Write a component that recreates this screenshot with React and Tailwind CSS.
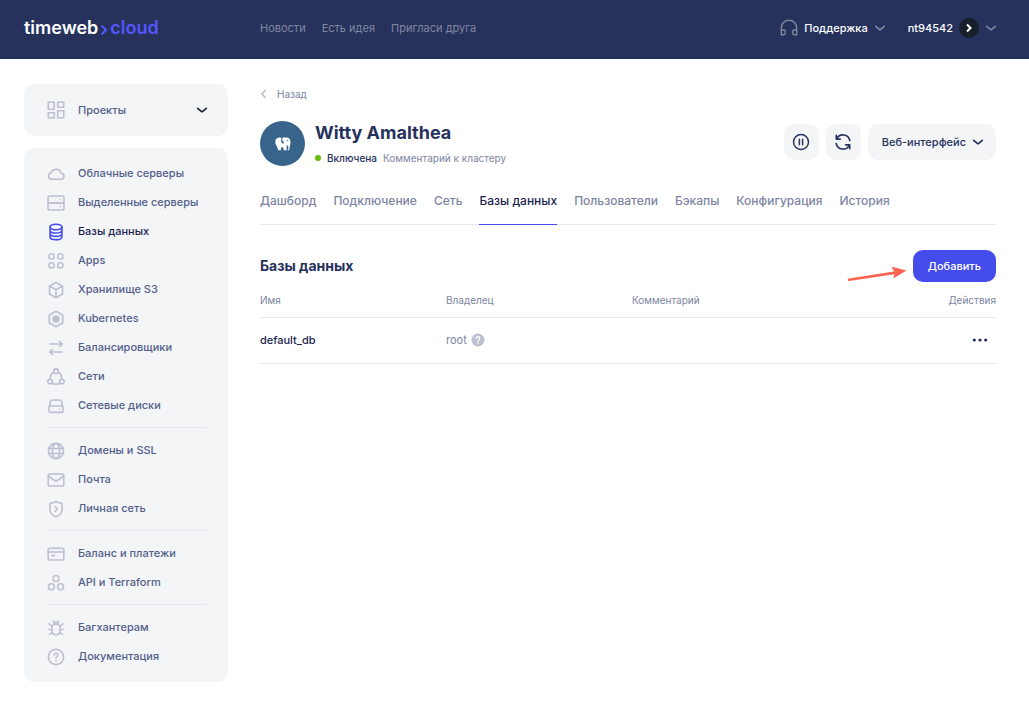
import React from "react";

function Icon({ children, className = "size-[18px] text-[#bcc0d0]" }) {
  return (
    <svg
      viewBox="0 0 18 18"
      className={`${className} shrink-0`}
      fill="none"
      stroke="currentColor"
      strokeWidth="1.6"
      strokeLinecap="round"
      strokeLinejoin="round"
      aria-hidden="true"
    >
      {children}
    </svg>
  );
}

function Chevron({ className = "" }) {
  return (
    <svg viewBox="0 0 12 8" className={`h-2 w-3 shrink-0 ${className}`} fill="none" stroke="currentColor" strokeWidth="1.7" strokeLinecap="round" strokeLinejoin="round" aria-hidden="true">
      <path d="M1.700 2.300 5.300 5.300a1.100 1.100 0 0 0 1.400 0L10.300 2.300" />
    </svg>
  );
}

const icons = {
  cloud: <path d="M4.300 14.200h9.400a3 3 0 0 0 .5-6A5.300 5.300 0 0 0 4.100 7.900a3.200 3.200 0 0 0 .2 6.300Z" />,
  servers: (
    <>
      <rect x="1" y="2" width="16" height="7" rx="1.800" />
      <rect x="1" y="9" width="16" height="7" rx="1.800" />
      <path d="M13.300 5.500h.01M13.300 12.500h.01" />
    </>
  ),
  database: (
    <>
      <ellipse cx="9" cy="4" rx="5.900" ry="2.700" />
      <path d="M3.100 4v10c0 1.500 2.600 2.700 5.900 2.700s5.900-1.200 5.900-2.700V4M3.100 7.400C3.100 8.900 5.700 10 9 10s5.900-1.100 5.900-2.600M3.100 10.800c0 1.500 2.600 2.600 5.900 2.600s5.900-1.100 5.900-2.600" />
    </>
  ),
  apps: (
    <>
      <rect x="2" y="2" width="5" height="5" rx="1.700" />
      <rect x="10.800" y="2" width="5" height="5" rx="1.700" />
      <rect x="2" y="10.800" width="5" height="5" rx="1.700" />
      <rect x="10.800" y="10.800" width="5" height="5" rx="1.700" />
    </>
  ),
  box: <path d="M9 1.500 15.500 5v8L9 16.700 2.500 13V5L9 1.500ZM2.800 5.300 9 8.800l6.200-3.500M9 8.800v7.600" />,
  kubernetes: (
    <>
      <path d="M9 1.300 15.700 5v8L9 16.700 2.300 13V5L9 1.300Z" />
      <path d="m9 4.700 1.400 1.300 1.900.2-.1 1.800 1.200 1-1.200 1 .1 1.800-1.900.2L9 13.300 7.600 12l-1.900-.2.100-1.800-1.200-1 1.200-1-.1-1.800L7.600 6 9 4.700Z" fill="currentColor" stroke="none" />
    </>
  ),
  arrows: <path d="M3 5h12M12.500 2.600 15.200 5l-2.700 2.400M15 13H3M5.500 10.600 2.800 13l2.700 2.400" />,
  network: (
    <>
      <circle cx="9" cy="3.200" r="2.300" />
      <circle cx="3.100" cy="13.500" r="2.300" />
      <circle cx="14.900" cy="13.500" r="2.300" />
      <path d="M6.800 4C4.600 5 3.300 8 3.200 11.200M11.200 4c2.200 1 3.500 4 3.600 7.200M5 15.300c2.500 1.200 5.500 1.200 8 0" />
    </>
  ),
  disk: (
    <>
      <path d="M2.200 9.500 3.500 4.300A2 2 0 0 1 5.400 3h7.200a2 2 0 0 1 1.900 1.300l1.300 5.200" />
      <rect x="2" y="9" width="14" height="6.400" rx="1.700" />
      <path d="M12.700 12.300h.01" />
    </>
  ),
  globe: (
    <>
      <circle cx="9" cy="9" r="7.600" />
      <ellipse cx="9" cy="9" rx="3.700" ry="7.600" />
      <path d="M1.700 6.500h14.600M1.700 11.500h14.600" />
    </>
  ),
  mail: (
    <>
      <rect x="1.200" y="3" width="15.600" height="12" rx="1.800" />
      <path d="m1.700 5.500 6.100 4a2.200 2.200 0 0 0 2.400 0l6.100-4" />
    </>
  ),
  shield: (
    <>
      <path d="M9 1.300c1.600 1.300 3.600 1.800 6 1.900v6.500c0 3.400-2.400 5.700-6 7.100-3.600-1.400-6-3.700-6-7.100V3.200c2.400-.1 4.400-.6 6-1.900Z" />
      <path d="m8.200 6.700 2.300 2.300-2.300 2.300" />
    </>
  ),
  card: (
    <>
      <rect x="1.200" y="3.200" width="15.600" height="11.800" rx="1.500" />
      <path d="M1.200 7h15.600M4.700 10.600h2.800" />
    </>
  ),
  api: (
    <>
      <circle cx="9" cy="4.500" r="3" />
      <circle cx="4.400" cy="12.800" r="3" />
      <circle cx="13.600" cy="12.800" r="3" />
    </>
  ),
  bug: (
    <path d="M5 8.200c0-1.800 1.300-3 4-3s4 1.200 4 3v3.600c0 2.300-1.500 4-4 4s-4-1.700-4-4V8.200ZM6.700 5.300c0-1.500.8-2 2.300-2s2.300.5 2.300 2M6.300 2l1 1.500M11.700 2l-1 1.500M5 7.300 2 4.800M13 7.300l3-2.500M5 10.500H1.800M13 10.500h3.200M5.500 13.300l-3 2M12.500 13.300l3 2" />
  ),
  help: (
    <>
      <circle cx="9" cy="9" r="7.600" />
      <path d="M7.100 7.300a1.900 1.900 0 1 1 2.800 1.600c-.6.300-.9.600-.9 1.200M9 12.600v.1" />
    </>
  ),
};

const groups = [
  [
    ["cloud", "Облачные серверы"],
    ["servers", "Выделенные серверы"],
    ["database", "Базы данных"],
    ["apps", "Apps"],
    ["box", "Хранилище S3"],
    ["kubernetes", "Kubernetes"],
    ["arrows", "Балансировщики"],
    ["network", "Сети"],
    ["disk", "Сетевые диски"],
  ],
  [
    ["globe", "Домены и SSL"],
    ["mail", "Почта"],
    ["shield", "Личная сеть"],
  ],
  [
    ["card", "Баланс и платежи"],
    ["api", "API и Terraform"],
  ],
  [
    ["bug", "Багхантерам"],
    ["help", "Документация"],
  ],
];

const tabs = ["Дашборд", "Подключение", "Сеть", "Базы данных", "Пользователи", "Бэкапы", "Конфигурация", "История"];

function Header() {
  return (
    <header className="flex h-[59px] items-center bg-[#26325c] pr-8 pb-[3px] pl-6 text-[11px]">
      <a href="#home" className="flex w-[236px] shrink-0 items-center text-[18px] leading-6 font-semibold text-white">
        timeweb
        <svg viewBox="0 0 8 12" className="mx-[2px] mt-1 h-3 w-2" fill="none" stroke="#5457ff" strokeWidth="2" aria-hidden="true">
          <path d="m1.500 1.500 4.500 4.500-4.500 4.500" />
        </svg>
        <span className="text-[#5457ff]">cloud</span>
      </a>
      <nav className="flex gap-4 text-[#8087a1]">
        <a href="#news">Новости</a>
        <a href="#idea">Есть идея</a>
        <a href="#invite">Пригласи друга</a>
      </nav>
      <div className="ml-auto flex items-center gap-[22px] font-medium text-white">
        <button type="button" className="flex items-center gap-[6px]">
          <Icon className="size-[18px] text-[#7d849d]">
            <path strokeWidth="1.400" d="M1.300 15.700V9a7.700 7.700 0 0 1 15.400 0v6.700M1.300 11h2.500a1.500 1.500 0 0 1 1.500 1.500v1.700a1.500 1.500 0 0 1-1.500 1.500H1.300M16.700 11h-2.500a1.500 1.500 0 0 0-1.500 1.500v1.700a1.500 1.500 0 0 0 1.500 1.500h2.500" />
          </Icon>
          Поддержка
          <Chevron className="text-[#7d849d]" />
        </button>
        <button type="button" className="flex items-center gap-[6px]">
          nt94542
          <span className="flex size-5 items-center justify-center rounded-full bg-[#172029]">
            <svg viewBox="0 0 8 10" className="h-[10px] w-2" fill="none" stroke="white" strokeWidth="2" aria-hidden="true">
              <path d="m2 1.500 3.500 3.500L2 8.500" />
            </svg>
          </span>
          <Chevron className="text-[#7d849d]" />
        </button>
      </div>
    </header>
  );
}

function Sidebar() {
  return (
    <aside className="w-[204px] shrink-0 text-[11px] font-medium text-[#535f8a]">
      <button type="button" className="flex h-[52px] w-full items-center gap-[13px] rounded-[10px] bg-[#f3f5f7] pr-5 pl-[23px]">
        <Icon>
          <path strokeLinejoin="miter" d="M1.300 1.300h5.900v7H1.300ZM10.700 1.300h6v5h-6ZM1.300 11.700h5.900v5H1.300ZM10.700 9.700h6v7h-6Z" />
        </Icon>
        Проекты
        <Chevron className="ml-auto text-[#1d2433]" />
      </button>
      <nav className="mt-3 rounded-[10px] bg-[#f3f5f7] py-[11px] pr-[22px] pl-[23px]">
        {groups.map((items, g) => (
          <React.Fragment key={g}>
            {g > 0 && <hr className="mt-[7px] mb-2 border-[#e5e8ec]" />}
            <ul>
              {items.map(([icon, label]) => {
                const active = icon === "database";
                return (
                  <li key={label}>
                    <a href={`#${icon}`} className={`flex h-[29px] items-center gap-[13px] whitespace-nowrap ${active ? "text-[#1b2550]" : ""}`}>
                      <Icon className={`size-[18px] ${active ? "text-[#444cec]" : "text-[#bcc0d0]"}`}>{icons[icon]}</Icon>
                      {label}
                    </a>
                  </li>
                );
              })}
            </ul>
          </React.Fragment>
        ))}
      </nav>
    </aside>
  );
}

export default function App() {
  return (
    <div className="min-h-screen bg-white font-['Inter','Noto_Sans',sans-serif] text-[#26325c]">
      <Header />
      <div className="flex gap-8 pt-[25px] pr-[33px] pb-[27px] pl-6">
        <Sidebar />
        <main className="min-w-0 flex-1 text-[11px]">
          <a href="#back" className="flex h-5 items-center gap-[9px] text-[10px] text-[#7d85a2]">
            <svg viewBox="0 0 8 10" className="h-[10px] w-2" fill="none" stroke="#b4b9ca" strokeWidth="1.3" aria-hidden="true">
              <path d="M5.500 1 2 5l3.500 4" />
            </svg>
            Назад
          </a>

          <div className="mt-[17px] flex items-start">
            <div className="flex size-[45px] shrink-0 items-center justify-center rounded-full bg-[#38648c]">
              <svg viewBox="0 0 16 14" className="h-[14px] w-4" aria-hidden="true">
                <path fill="white" d="M3.500.7C5 .2 6 .4 6.500 1c-.6 1.700-.4 3.700.5 5 .8 1 1.900.8 2-.4 0-.6-.6-.8-1.100-1.300C7 3.200 6.900 1.600 7.800.8c1-.8 2.300-.7 3-.1 1.600-.5 3.400.2 4.200 2 .8 1.900.5 4.500-.2 6.300-.2.600-.3 1-.2 1.700.1 1.600-.8 2.700-1.800 2.600-.5-.1-.5-.7 0-.9.600-.3.700-.9.600-1.600-.2-1.300-.9-2.400-1.600-3.200-.2 1.700-.3 3.600-.2 5.700H8.700c-.1-1.200-.2-2.400-.7-3.300-.6.500-1.300.6-2 .5-.1 1-.1 1.900 0 2.800H3.200C2.900 11.500 2.200 9.900 1.300 8.500.2 6.500.1 4.500.7 2.800 1.100 1.700 2.200 1 3.500.7Z" />
                <circle cx="12.400" cy="3.600" r=".7" fill="#38648c" />
              </svg>
            </div>
            <div className="ml-[10px]">
              <h1 className="text-[18px] leading-6 font-bold">Witty Amalthea</h1>
              <p className="mt-[5px] flex items-center gap-[6px] leading-4 text-[#7d85a2]">
                <span className="size-[6px] rounded-full bg-[#67be08]" />
                <span className="text-[10px] font-medium text-[#26325c]">Включена</span>
                <span className="text-[10px]">Комментарий к кластеру</span>
              </p>
            </div>
            <div className="ml-auto flex gap-[7px] pt-[3px]">
              <button type="button" aria-label="Пауза" className="flex h-9 w-[35px] items-center justify-center rounded-[10px] bg-[#f3f5f7]">
                <Icon className="size-[18px]">
                  <circle cx="9" cy="9" r="7.500" strokeWidth="1.500" />
                  <path d="M7.400 6.200v5.600M10.600 6.200v5.600" strokeWidth="1.500" />
                </Icon>
              </button>
              <button type="button" aria-label="Перезагрузить" className="flex h-9 w-[35px] items-center justify-center rounded-[10px] bg-[#f3f5f7]">
                <Icon className="size-[18px]">
                  <path strokeWidth="1.600" d="M2.300 2.200v3.900h4M2.600 6A7 7 0 0 1 15.800 7.500M15.700 15.800v-3.900h-4M15.400 12A7 7 0 0 1 2.200 10.500" />
                </Icon>
              </button>
              <button type="button" className="flex h-9 items-center gap-[6px] rounded-[10px] bg-[#f3f5f7] px-3 pl-[14px] font-medium whitespace-nowrap">
                Веб-интерфейс
                <Chevron />
              </button>
            </div>
          </div>

          <nav className="mt-6 flex gap-[17px] border-b border-[#e5e8ef] text-[12px] leading-[22px] font-medium text-[#7d85a2]">
            {tabs.map((tab) => (
              <a
                key={tab}
                href="#tab"
                className={`-mb-px border-b pb-3 whitespace-nowrap ${tab === "Базы данных" ? "border-b-[#444cec] text-[#1b2550]" : "border-b-transparent"}`}
              >
                {tab}
              </a>
            ))}
          </nav>

          <section className="mt-[25px]">
            <div className="flex items-center justify-between">
              <h2 className="text-[14px] leading-5 font-bold">Базы данных</h2>
              <div className="relative">
                <button type="button" className="h-8 rounded-[10px] bg-[#444cec] px-[15px] font-medium text-white">
                  Добавить
                </button>
                <svg viewBox="0 0 60 18" className="absolute right-full bottom-0 mr-[6px] h-[18px] w-[60px]" aria-hidden="true">
                  <path d="M2 15.800 47 8.900" stroke="#fa6450" strokeWidth="2.600" strokeLinecap="round" />
                  <path d="M59.500 6.500 44.500 2.800l3.200 5.600-1.400 6.100L59.500 6.500Z" fill="#fa6450" />
                </svg>
              </div>
            </div>
            <table className="mt-[3px] w-full table-fixed text-left">
              <thead>
                <tr className="h-8 border-b border-[#e5e8ec] text-[10px] text-[#7d85a2]">
                  <th className="w-[186px] font-normal">Имя</th>
                  <th className="w-[186px] font-normal">Владелец</th>
                  <th className="w-[186px] font-normal">Комментарий</th>
                  <th className="text-right font-normal">Действия</th>
                </tr>
              </thead>
              <tbody>
                <tr className="h-[46px] border-b border-[#e5e8ec]">
                  <td className="font-medium text-[#1b2550]">default_db</td>
                  <td className="text-[#7d85a2]">
                    <span className="flex items-center gap-1">
                      root
                      <svg viewBox="0 0 14 14" className="size-[14px]" fill="none" aria-hidden="true">
                        <circle cx="7" cy="7" r="6.500" fill="#bcc0d0" />
                        <path d="M5.200 5.500a1.800 1.800 0 1 1 2.700 1.500c-.6.300-.9.600-.9 1.200M7 10v.3" stroke="white" strokeWidth="1.300" strokeLinecap="round" />
                      </svg>
                    </span>
                  </td>
                  <td />
                  <td>
                    <button type="button" aria-label="Действия" className="mr-2 ml-auto block">
                      <svg viewBox="0 0 16 4" className="h-1 w-4" fill="currentColor" aria-hidden="true">
                        <circle cx="2.300" cy="2" r="1.600" />
                        <circle cx="8" cy="2" r="1.600" />
                        <circle cx="13.700" cy="2" r="1.600" />
                      </svg>
                    </button>
                  </td>
                </tr>
              </tbody>
            </table>
          </section>
        </main>
      </div>
    </div>
  );
}
